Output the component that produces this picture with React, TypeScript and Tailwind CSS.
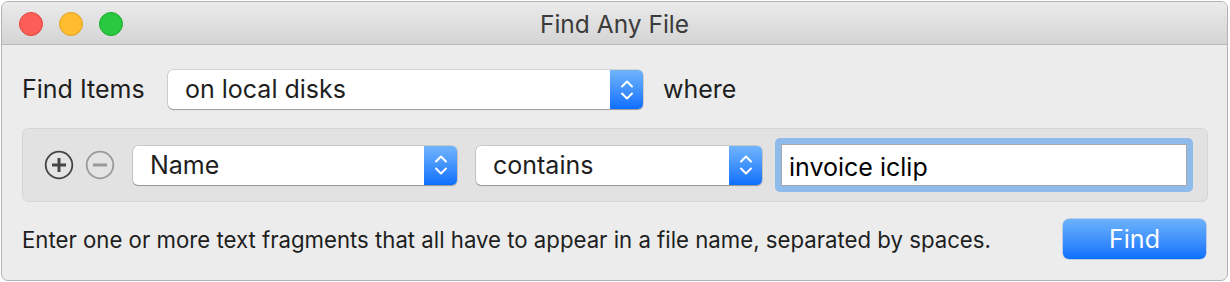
import React from "react";

// macOS-style popup button with the blue stepper on the right
function PopupButton({ label, width }: { label: string; width: string }) {
  return (
    <div
      className={`${width} h-[39px] flex items-stretch rounded-[5px] bg-white shadow-[0_0_0_0.5px_rgba(0,0,0,0.22),0_1px_1px_rgba(0,0,0,0.25)]`}
    >
      <div className="flex-1 flex items-center pl-[17px] text-[25px] text-[#1e1e1e] leading-none">
        {label}
      </div>
      <div className="w-[33px] rounded-r-[5px] bg-gradient-to-b from-[#6fb4fb] to-[#0a6efd] flex items-center justify-center">
        <svg width="16" height="26" viewBox="0 0 16 26" fill="none">
          <path
            d="M3 9.5 L8 4.5 L13 9.5"
            stroke="white"
            strokeWidth="2"
            strokeLinecap="round"
            strokeLinejoin="round"
          />
          <path
            d="M3 16.5 L8 21.5 L13 16.5"
            stroke="white"
            strokeWidth="2"
            strokeLinecap="round"
            strokeLinejoin="round"
          />
        </svg>
      </div>
    </div>
  );
}

function RoundButton({ minus }: { minus?: boolean }) {
  const color = minus ? "#9a9a9a" : "#444444";
  return (
    <svg width="30" height="30" viewBox="0 0 30 30">
      <circle cx="15" cy="15" r="13.3" fill="#e4e4e4" stroke={color} strokeWidth="1.8" />
      <path d="M8 15 H22" stroke={color} strokeWidth="3" />
      {!minus && <path d="M15 8 V22" stroke={color} strokeWidth="3" />}
    </svg>
  );
}

export default function App() {
  return (
    <div
      className="w-[1230px] h-[282px] bg-white p-[1px] pr-[2px]"
      style={{ fontFamily: "Inter, 'Liberation Sans', sans-serif" }}
    >
      <div className="h-[280px] flex flex-col rounded-[7px] border border-[#b2b2b2] bg-[#ececec] overflow-hidden">
        {/* title bar */}
        <div className="h-[43px] shrink-0 flex items-center relative bg-gradient-to-b from-[#ebebeb] to-[#d4d4d4] border-b border-[#b8b8b8]">
          <div className="flex gap-[16px] pl-[17px] pt-[2px]">
            <div className="w-[24px] h-[24px] rounded-full bg-[#fd5d57] border border-[#e0443e]" />
            <div className="w-[24px] h-[24px] rounded-full bg-[#febc2e] border border-[#dea123]" />
            <div className="w-[24px] h-[24px] rounded-full bg-[#28c840] border border-[#1aab29]" />
          </div>
          <div className="absolute inset-0 pt-[3px] flex items-center justify-center text-[24.5px] text-[#3b3b3b] pointer-events-none">
            Find Any File
          </div>
        </div>

        {/* body */}
        <div className="flex-1 flex flex-col px-[20px]">
          <div className="mt-[25px] flex items-center">
            <span className="text-[25px] text-[#1e1e1e] w-[146px]">Find Items</span>
            <PopupButton label="on local disks" width="w-[475px]" />
            <span className="ml-[20px] text-[25px] text-[#1e1e1e]">where</span>
          </div>

          <div className="mt-[19px] h-[74px] w-[1186px] flex items-center rounded-[6px] bg-[#e2e2e2] border border-[#d6d6d6] pl-[21px]">
            <RoundButton />
            <div className="w-[11px]" />
            <RoundButton minus />
            <div className="w-[18px]" />
            <PopupButton label="Name" width="w-[324px]" />
            <div className="w-[19px]" />
            <PopupButton label="contains" width="w-[286px]" />
            <div className="ml-[13px] rounded-[5px] bg-[#8fbbec] p-[6px]">
              <div className="w-[406px] h-[42px] bg-white border border-[#a9a9a9] flex items-center pl-[7px] pt-[5px] text-[25px] text-black">
                invoice iclip
              </div>
            </div>
          </div>

          <div className="mt-[17px] flex items-center justify-between">
            <span className="text-[22.2px] text-[#1e1e1e] pt-[2px]">
              Enter one or more text fragments that all have to appear in a file name, separated by spaces.
            </span>
            <button className="mr-[1px] w-[143px] h-[40px] pt-[2px] rounded-[6px] bg-gradient-to-b from-[#6cb2fb] to-[#0b6ffd] text-white text-[25px] shadow-[0_0_0_0.5px_rgba(0,80,200,0.4)]">
              Find
            </button>
          </div>
        </div>
      </div>
    </div>
  );
}
